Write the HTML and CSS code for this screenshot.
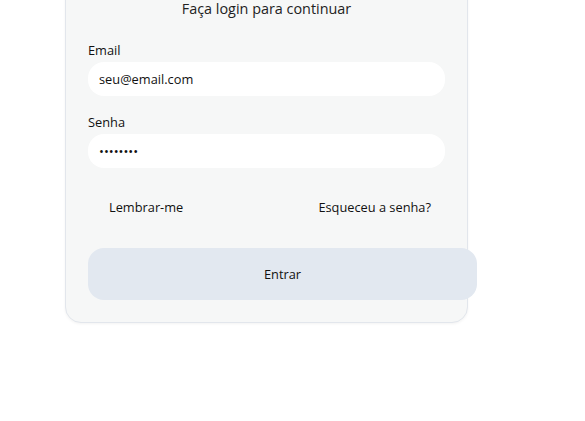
FILE: index.html
```html
<!DOCTYPE html>
<html lang="pt-BR">
<head>
<meta charset="utf-8">
<link rel="stylesheet" href="styles.css">
</head>
<body>
<div class="card">
  <p class="subtitle">Faça login para continuar</p>
  <form class="form">
    <div class="field">
      <label class="label">Email</label>
      <div class="input">seu@email.com</div>
    </div>
    <div class="field">
      <label class="label">Senha</label>
      <div class="input pw">••••••••</div>
    </div>
    <div class="options">
      <span class="remember">Lembrar-me</span>
      <a class="forgot">Esqueceu a senha?</a>
    </div>
    <button type="button" class="btn">Entrar</button>
  </form>
</div>
</body>
</html>
```
FILE: styles.css
```css
html, body { margin: 0; padding: 0; background: #ffffff; }
body {
  font-family: "Open Sans", "Noto Sans", sans-serif;
  color: #111111;
  height: 421px;
  overflow: hidden;
}
.card {
  width: 357px;
  margin: -24px 0 0 65px;
  padding: 22px;
  background: #f6f7f7;
  border: 1px solid #e2e6ec;
  border-radius: 16px;
  box-shadow: 0 1px 3px rgba(0,0,0,0.05);
}
.subtitle {
  margin: 0 0 22px 0;
  text-align: center;
  font-size: 14.4px;
  line-height: 20px;
  color: #222222;
}
.form { display: flex; flex-direction: column; }
.field { display: flex; flex-direction: column; margin-bottom: 17px; }
.label { font-size: 12.8px; line-height: 18px; margin-bottom: 3px; }
.input {
  background: #ffffff;
  height: 34px;
  border-radius: 16px;
  padding: 0 11px;
  font-size: 12.8px;
  line-height: 34px;
}
.pw { font-size: 13px; }
.options {
  display: flex;
  justify-content: space-between;
  padding: 13px 14px 0 21px;
  font-size: 12.8px;
  line-height: 18px;
  margin-bottom: 32px;
}
.forgot { color: #111111; }
.btn {
  box-sizing: content-box;
  width: 100%;
  padding: 16px 16px 16px 16px;
  margin: 0;
  height: 20px;
  border: none;
  border-radius: 16px;
  background: #e2e8f0;
  font-family: inherit;
  font-size: 12.8px;
  color: #111111;
}
```
